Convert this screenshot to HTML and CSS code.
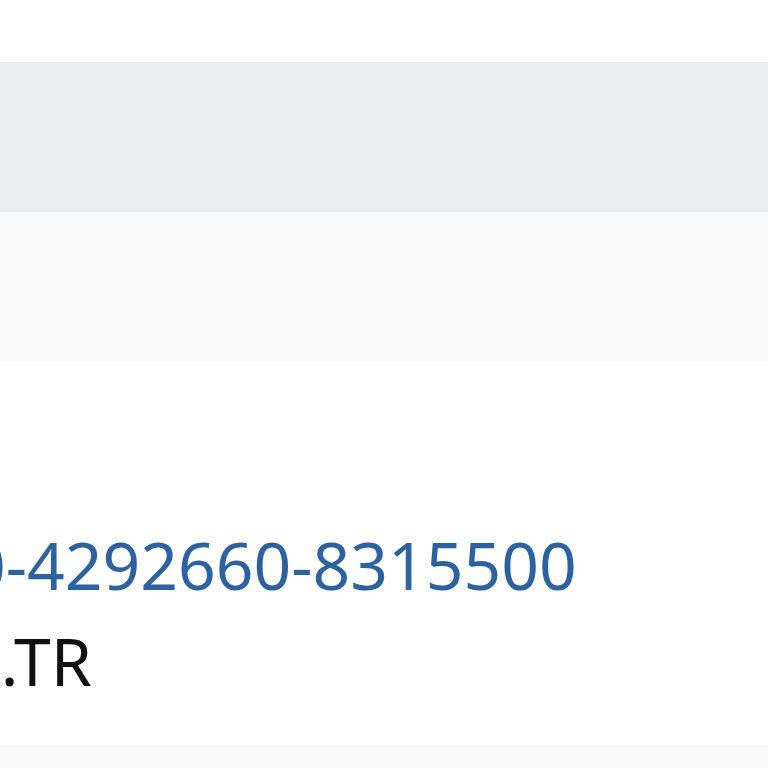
FILE: index.html
```html
<!DOCTYPE html>
<html lang="en">
<head>
    <meta charset="utf-8">
    <link rel="stylesheet" href="styles.css">
    <title>Contact</title>
</head>
<body>
    <div class="page">
        <div class="top-space"></div>
        <div class="band band-dark"></div>
        <div class="band band-light"></div>
        <div class="contact">
            <a class="phone" href="#">0-4292660-8315500</a>
            <div class="domain">M.TR</div>
        </div>
        <div class="footer-band"></div>
    </div>
</body>
</html>
```

FILE: styles.css
```css
body {
    margin: 0;
    background-color: #fff;
    font-family: "Noto Sans", "Open Sans", sans-serif;
}

.page {
    width: 768px;
    height: 768px;
    overflow: hidden;
}

.top-space {
    height: 62px;
}

.band {
    height: 150px;
}

.band-dark {
    background-color: #eaebed;
}

.band-light {
    background-color: #f8f8f8;
}

.contact {
    height: 383px;
    box-sizing: border-box;
    display: flex;
    flex-direction: column;
    justify-content: flex-end;
    padding-bottom: 37px;
    font-size: 66px;
    line-height: 96px;
}

.phone {
    margin-left: -32px;
    color: #2c62a0;
    text-decoration: none;
}

.domain {
    margin-left: -59px;
    color: #111;
}

.footer-band {
    height: 23px;
    background-color: #f9f9f9;
}
```
